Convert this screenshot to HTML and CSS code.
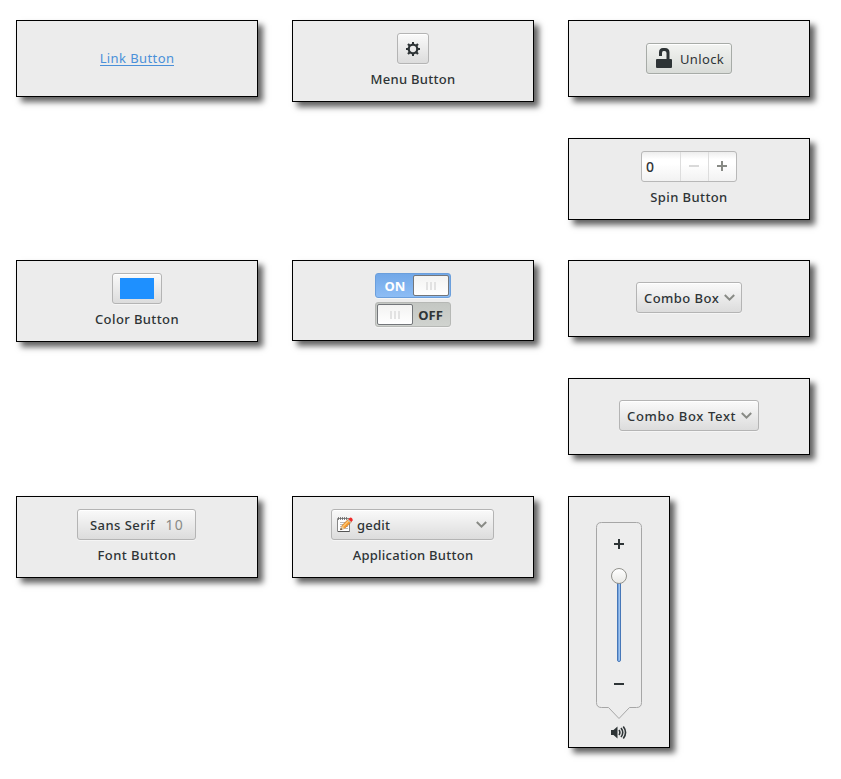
FILE: index.html
```html
<!DOCTYPE html>
<html lang="en">
<head>
<meta charset="utf-8">
<title>Buttons</title>
<link rel="stylesheet" href="styles.css">
</head>
<body>
<main class="gallery">
  <section class="card c1 r1"><a class="link t-link">Link Button</a></section>
  <section class="card tall c2 r1">
    <div class="btn menu"><svg width="16" height="16" viewBox="0 0 16 16"><g stroke="#2e3436" fill="none"><circle cx="8" cy="8" r="4.300" stroke-width="2.300"/><path stroke-width="2" d="M8 1v3M8 12v3M1 8h3M12 8h3"/><path stroke-width="2.200" d="M3 3l2 2M11 11l2 2M3 13l2-2M11 5l2-2"/></g></svg></div>
    <span class="label t-menu">Menu Button</span>
  </section>
  <section class="card c3 r1">
    <div class="btn unlock"><svg width="16" height="20" viewBox="0 0 16 20"><path fill="#2e3436" d="M3 8V4.500Q3 0 7 0h2q4.500 0 4.500 4.500V11H15q1 0 1 1v7q0 1-1 1H1q-1 0-1-1v-7q0-1 1-1h9.500V5q0-2-2-2H7.500Q6 3 6 5v3z"/></svg><span class="t-unlock">Unlock</span></div>
  </section>
  <section class="card tall c3 r2">
    <div class="spin"><span class="value">0</span><span class="step"><svg width="10" height="10"><path d="M0 4h10v2H0z" fill="#d9d9d9"/></svg></span><span class="step"><svg width="10" height="10"><path d="M0 4h4V0h2v4h4v2H6v4H4V6H0z" fill="#888a85"/></svg></span></div>
    <span class="label t-spin">Spin Button</span>
  </section>
  <section class="card tall c1 r3">
    <div class="btn color"><i class="swatch"></i></div>
    <span class="label t-color">Color Button</span>
  </section>
  <section class="card switches c2 r3">
    <div class="switch on"><b>ON</b><i class="knob"><i></i><i></i><i></i></i></div>
    <div class="switch"><i class="knob"><i></i><i></i><i></i></i><b>OFF</b></div>
  </section>
  <section class="card raised c3 r3"><div class="btn combo"><span class="t-combo">Combo Box</span><svg class="arrow" width="11" height="8"><path d="M.8 1 5.500 5.700 10.200 1"/></svg></div></section>
  <section class="card raised c3 r4"><div class="btn combo wide"><span class="t-combotext">Combo Box Text</span><svg class="arrow" width="11" height="8"><path d="M.8 1 5.500 5.700 10.200 1"/></svg></div></section>
  <section class="card tall c1 r5">
    <div class="btn font"><span class="t-sans">Sans Serif</span><span class="size">10</span></div>
    <span class="label t-font">Font Button</span>
  </section>
  <section class="card tall c2 r5">
    <div class="btn app"><svg width="16" height="16" viewBox="0 0 16 16"><path d="M.5 1.500h12v13H.5z" fill="#fff" stroke="#888"/><path d="M1 14.500h11.500" stroke="#555"/><path d="M1.500 0v3M3.500 0v3M5.500 0v3M7.500 0v3M9.500 0v3" stroke="#666" stroke-width=".8"/><path d="M3 5.500h6M3 7.500h4M3 9.500h2M9 9.500h2M8 11.500h3" stroke="#bbb"/><path d="m3.500 12.700 1.300-4L11.500 2 14.500 5 7.500 11.500z" fill="#f79a2c" stroke="#b5651d" stroke-width=".5"/><path d="M6 9.500 12 3.500" stroke="#fcc878" stroke-width="1.200"/><path d="m3.500 12.700 1.300-4 2.700 2.800z" fill="#e8cfa5"/><path d="m3.300 13 .6-2 1.300 1.300z" fill="#222"/><path d="M11.300 2.200 13 .8q1-.5 2 .4t.6 2L14.300 5z" fill="#ef2929"/><path d="m11 2.600 2.900 2.900" stroke="#bbb" stroke-width="1.200"/></svg><span class="t-gedit">gedit</span><svg class="arrow" width="11" height="8"><path d="M.8 1 5.500 5.700 10.200 1"/></svg></div>
    <span class="label t-app">Application Button</span>
  </section>
  <section class="card volume c3 r5">
    <div class="scale">
      <svg class="bubble" width="46" height="198"><path d="M5.500.500h35q5 0 5 5v175q0 5-5 5h-7L23 196.500 12.500 185.500h-7q-5 0-5-5V5.500q0-5 5-5z"/></svg>
      <svg class="plus" width="10" height="10"><path d="M0 4h4V0h2v4h4v2H6v4H4V6H0z" fill="#2e3436"/></svg>
      <div class="track"><i class="handle"></i></div>
      <i class="minus"></i>
    </div>
    <svg class="speaker" width="16" height="13" viewBox="0 0 16 13"><path d="M0 4h2.500L6.500.5v12L2.500 9H0z" fill="#2e3436"/><path d="M8 4q1.800 2.500 0 5M10 2q3.500 4.500 0 9M12.300.500q4.500 6 0 12" fill="none" stroke="#2e3436" stroke-width="1.600"/></svg>
  </section>
</main>
</body>
</html>
```
FILE: styles.css
```css
* { box-sizing: border-box; }
body {
  margin: 0;
  background: #fff;
  color: #2e3436;
  font: 500 13px/18px "Noto Sans", "Open Sans", sans-serif;
}
svg { display: block; flex: none; }
.gallery {
  display: grid;
  grid-template-columns: 242px 242px 242px;
  grid-template-rows: 118px 122px 118px 118px 252px;
  column-gap: 34px;
  align-items: start;
  padding: 20px 16px;
}
.c1 { grid-column: 1; } .c2 { grid-column: 2; } .c3 { grid-column: 3; }
.r1 { grid-row: 1; } .r2 { grid-row: 2; } .r3 { grid-row: 3; } .r4 { grid-row: 4; } .r5 { grid-row: 5; }
.card {
  height: 77px;
  border: 1px solid #000;
  background: #ececec;
  box-shadow: 5px 5px 6px rgba(0, 0, 0, .62);
  display: flex;
  flex-direction: column;
  align-items: center;
  justify-content: center;
  white-space: nowrap;
}
.card.tall { height: 82px; justify-content: flex-start; padding-top: 12px; }
.card.raised { padding-bottom: 2px; }
.link { color: #4a90d9; border-bottom: 1px solid #4a90d9; height: 16px; line-height: 16px; font-weight: 400; margin-top: -1px; }
.label { margin-top: 6px; }
.t-link { letter-spacing: .4px; }
.t-menu { letter-spacing: .3px; }
.t-spin, .t-color { letter-spacing: .4px; }
.t-combo, .t-font, .t-sans { letter-spacing: .45px; }
.t-combotext { letter-spacing: .65px; }
.t-app { letter-spacing: .25px; }
.t-unlock { letter-spacing: .35px; }
.btn {
  display: flex;
  align-items: center;
  height: 31px;
  border: 1px solid #b4b4b4;
  border-radius: 3px;
  background: linear-gradient(#fafafa, #dcdcdc);
  box-shadow: 0 1px #f5f5f5, inset 0 1px #fff;
}
.menu { width: 32px; justify-content: center; }
.unlock { width: 86px; padding-left: 9px; gap: 8px; border-color: #a7aba7; background: linear-gradient(#f3f4f2, #d9dcd8); font-weight: 400; }
.unlock svg { margin-top: -2px; }
.spin {
  display: flex;
  width: 96px;
  height: 31px;
  border: 1px solid #b8b8b8;
  border-radius: 3px;
  background: linear-gradient(#ededed, #fff 25%, #fff 40%, #f2f2f2);
}
.value { width: 38px; padding-left: 4px; line-height: 30px; font-size: 14px; }
.step { width: 28px; padding-right: 1px; border-left: 1px solid #ddd; display: flex; align-items: center; justify-content: center; }
.step svg { margin-top: -1px; }
.color { width: 50px; justify-content: center; }
.swatch { width: 34px; height: 21px; background: #1e90ff; }
.card.switches { height: 81px; gap: 4px; padding-bottom: 1px; }
.switch {
  display: flex;
  align-items: center;
  width: 76px;
  height: 25px;
  padding: 0 1px;
  border: 1px solid #b6b8b5;
  border-radius: 3px;
  background: linear-gradient(#c4c7c3, #d0d3cf);
  box-shadow: 0 1px #f5f5f5;
}
.switch b { width: 36px; padding-right: 1px; text-align: center; font-weight: 700; }
.switch.on b { padding: 0; }
.switch.on { color: #fff; border-color: #6b9fdc; background: linear-gradient(#72a8e8, #8dbdf5); }
.knob {
  display: flex;
  justify-content: center;
  align-items: center;
  gap: 2px;
  width: 36px;
  height: 21px;
  border: 1px solid #73767a;
  border-radius: 2px;
  background: linear-gradient(#f3f3f2, #fff);
}
.knob i { width: 2px; height: 8px; background: #e2e2e2; }
.combo { width: 106px; padding: 0 6px 0 7px; justify-content: space-between; }
.wide { width: 140px; }
.arrow { margin-top: 1px; }
.arrow path { fill: none; stroke: #888a85; stroke-width: 2; }
.font { width: 119px; padding: 0 11px 0 12px; justify-content: space-between; margin-right: 1px; }
.size { color: #888a85; letter-spacing: 1.2px; font-size: 14px; font-weight: 400; }
.app { width: 163px; padding: 0 6px 0 5px; margin-right: 1px; }
.app .t-gedit { margin-left: 4px; letter-spacing: .2px; }
.app .arrow { margin-left: auto; }
.volume { width: 102px; height: 252px; justify-content: flex-start; padding-top: 25px; }
.scale { position: relative; width: 46px; height: 198px; display: flex; flex-direction: column; align-items: center; padding-top: 17px; }
.bubble { position: absolute; left: 0; top: 0; }
.bubble path { fill: #ededed; stroke: #a6a6a6; }
.plus, .minus { position: relative; }
.track {
  position: relative;
  width: 4px;
  height: 84px;
  margin-top: 29px;
  border: 1px solid #4677b8;
  border-radius: 2px;
  background: #9fc4ee;
}
.track::after { content: ""; display: block; width: 1px; height: 100%; background: #79a6df; }
.handle {
  position: absolute;
  left: -7px;
  top: -11px;
  width: 16px;
  height: 16px;
  border: 1px solid #92928c;
  border-radius: 50%;
  background: linear-gradient(#fff, #e9e9e6);
}
.minus { width: 10px; height: 2px; margin-top: 21px; background: #2e3436; }
.speaker { margin-top: 6px; }
```
